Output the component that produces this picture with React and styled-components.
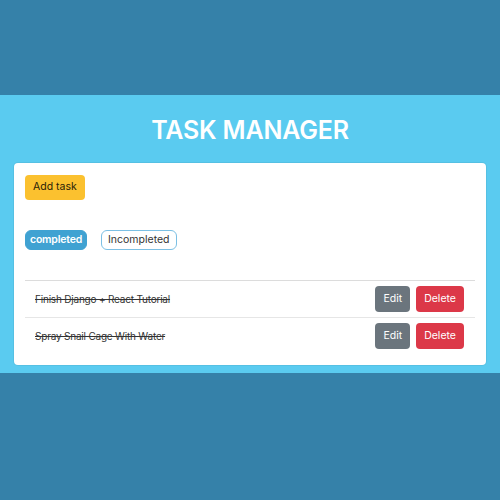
import React from "react";
import styled, { createGlobalStyle } from "styled-components";

const tasks = [
  { id: 1, title: "Finish Django + React Tutorial", completed: true },
  { id: 2, title: "Spray Snail Cage With Water", completed: true },
];

const GlobalStyle = createGlobalStyle`
  html, body {
    margin: 0;
    padding: 0;
    background: #3581a9;
    font-family: Inter, "Liberation Sans", sans-serif;
  }
`;

const Page = styled.div`
  height: 500px;
  padding-top: 95px;
  box-sizing: border-box;
  background: #3581a9;
`;

const Band = styled.main`
  background: #5acbf0;
  padding: 16px 14px 8px;
`;

const Title = styled.h1`
  margin: 0 0 14px;
  text-align: center;
  color: #fff;
  font-size: 25px;
  font-weight: 600;
  line-height: 38px;
  letter-spacing: -0.2px;
`;

const Card = styled.section`
  background: #fff;
  border-radius: 4px;
  padding: 11px;
  box-shadow: 0 0 0 1px rgba(0, 0, 0, 0.05);
`;

const Button = styled.button`
  font-family: inherit;
  font-size: 10.5px;
  line-height: 1;
  height: ${(p) => p.h || 26}px;
  padding: 0 ${(p) => p.px || 8}px;
  border: none;
  border-radius: 4px;
  background: ${(p) => p.bg};
  color: ${(p) => p.fg || "#fff"};
  cursor: pointer;
`;

const Tabs = styled.div`
  display: flex;
  gap: 14px;
  margin: 30px 0 30px;
`;

const Tab = styled.span`
  display: inline-flex;
  align-items: center;
  height: 20px;
  padding: 0 ${(p) => (p.active ? 4 : 6)}px;
  box-sizing: border-box;
  border-radius: 6px;
  font-size: 10.5px;
  letter-spacing: ${(p) => (p.active ? -0.2 : 0)}px;
  font-weight: ${(p) => (p.active ? 600 : 400)};
  background: ${(p) => (p.active ? "#40a2d2" : "#fff")};
  color: ${(p) => (p.active ? "#fff" : "#333")};
  border: 1px solid ${(p) => (p.active ? "#40a2d2" : "#7cc0e4")};
`;

const List = styled.ul`
  list-style: none;
  margin: 0;
  padding: 0;
  border-top: 1px solid #dcdcdc;
`;

const Row = styled.li`
  display: flex;
  align-items: center;
  justify-content: space-between;
  height: 36px;
  padding: 0 11px 0 10px;
  & + & {
    border-top: 1px solid #e6e6e6;
  }
`;

const TaskText = styled.span`
  font-size: 10px;
  letter-spacing: -0.2px;
  color: #333;
  text-decoration: ${(p) => (p.done ? "line-through" : "none")};
`;

const Actions = styled.div`
  display: flex;
  gap: 6px;
`;

export default function App() {
  return (
    <>
      <GlobalStyle />
      <Page>
        <Band>
          <Title>TASK MANAGER</Title>
          <Card>
            <Button bg="#fbc12f" fg="#2a2208" h={25}>
              Add task
            </Button>
            <Tabs>
              <Tab active>completed</Tab>
              <Tab>Incompleted</Tab>
            </Tabs>
            <List>
              {tasks.map((t) => (
                <Row key={t.id}>
                  <TaskText done={t.completed}>{t.title}</TaskText>
                  <Actions>
                    <Button bg="#6b757d">Edit</Button>
                    <Button bg="#dc3848" px={8}>
                      Delete
                    </Button>
                  </Actions>
                </Row>
              ))}
            </List>
          </Card>
        </Band>
      </Page>
    </>
  );
}
